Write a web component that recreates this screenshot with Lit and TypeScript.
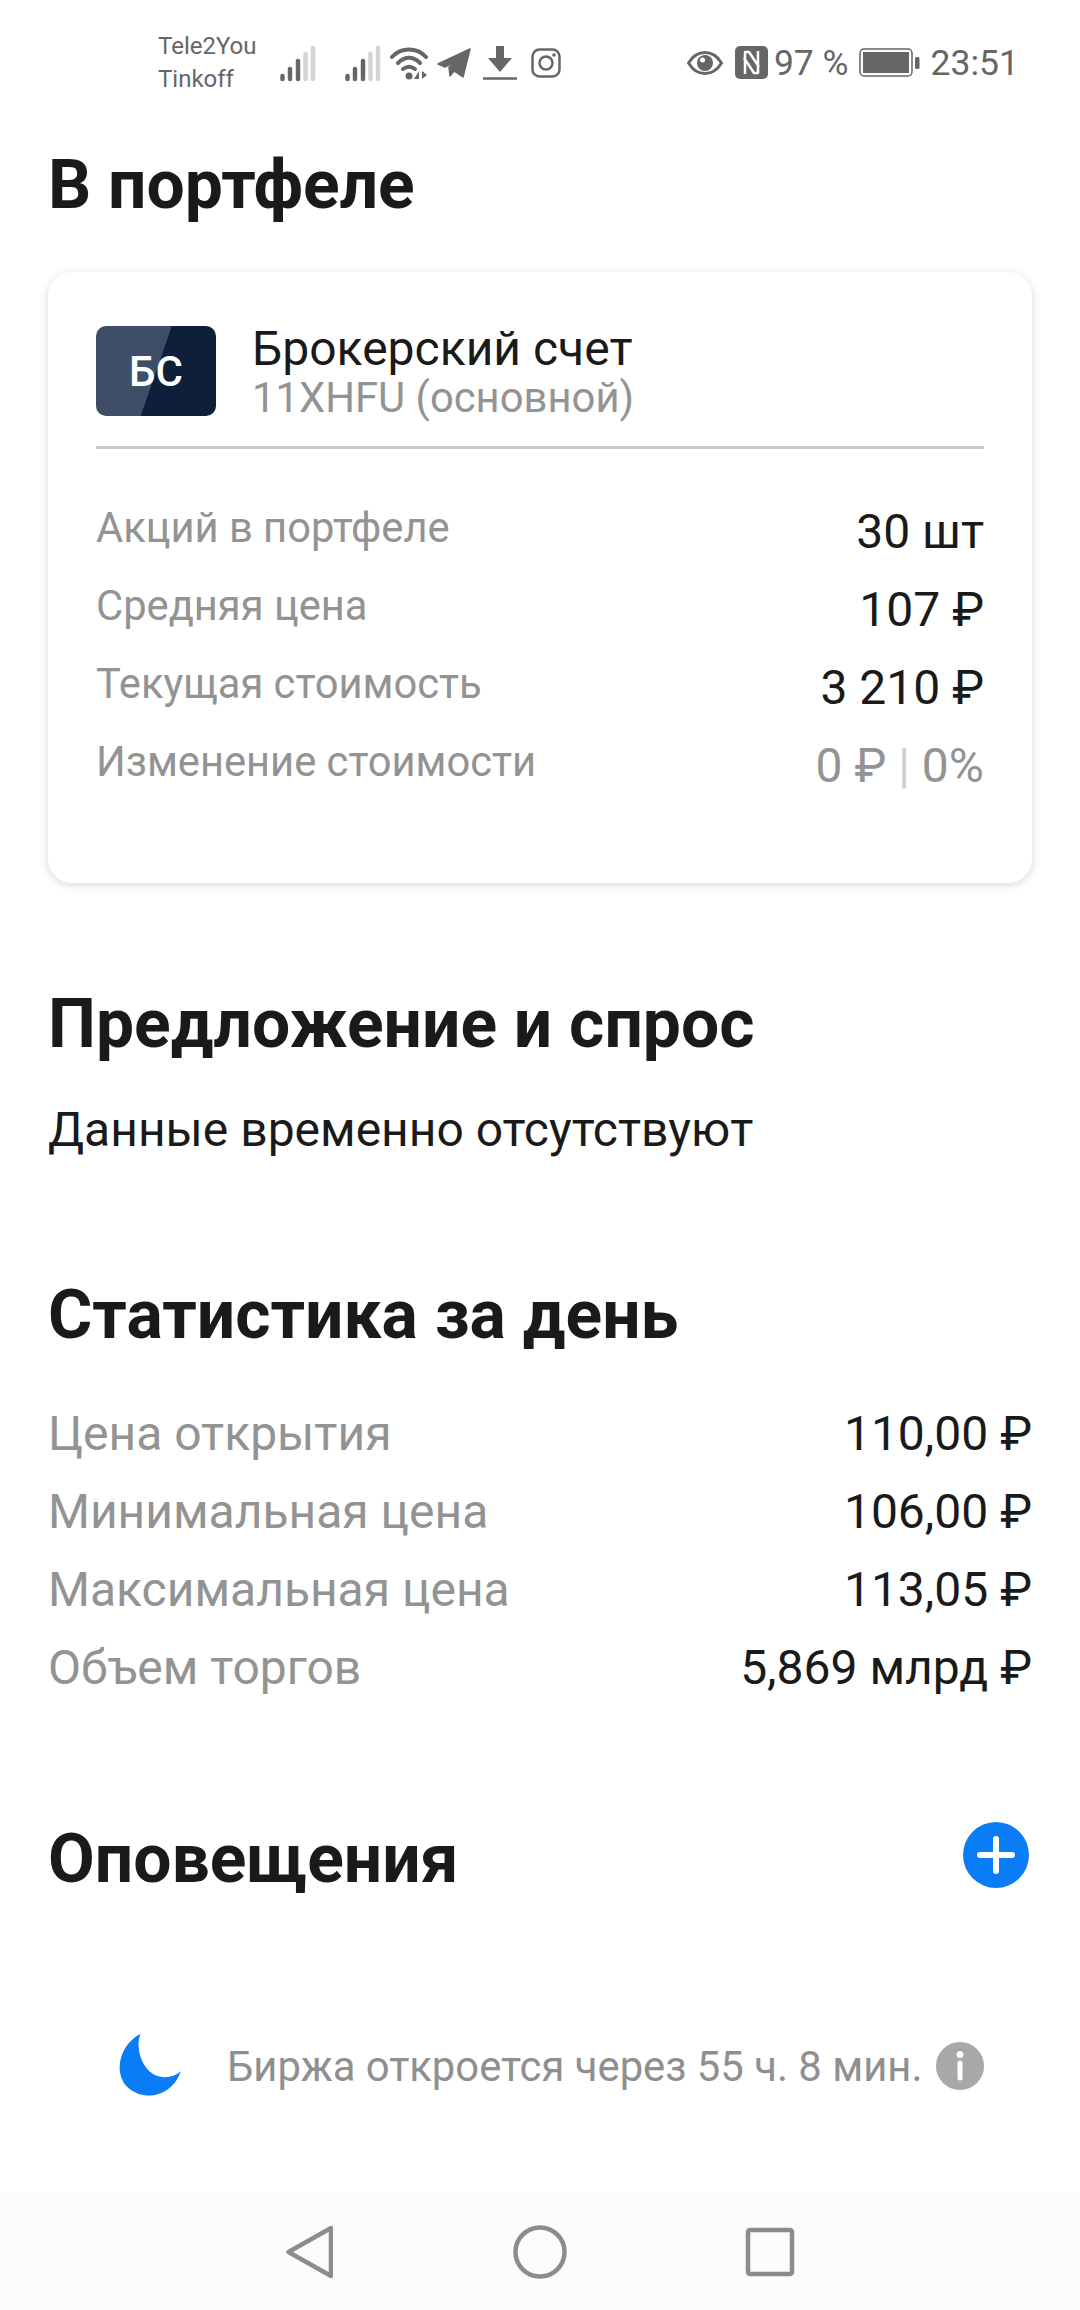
import { LitElement, html, css, svg } from "lit";
import { customElement } from "lit/decorators.js";

const signal = svg`<svg class="sig" width="36" height="38" viewBox="0 0 36 38"><g stroke-linecap="round" stroke-width="4.500" fill="none"><path d="M2.500 32v3" stroke="#666"/><path d="M10 25v10" stroke="#666"/><path d="M18 17v18" stroke="#666"/><path d="M25.500 10v25" stroke="#d4d4d4"/><path d="M33 4v31" stroke="#d4d4d4"/></g></svg>`;

const rows1 = [
  ["Акций в портфеле", "30 шт"],
  ["Средняя цена", "107 ₽"],
  ["Текущая стоимость", "3 210 ₽"],
];
const rows2 = [
  ["Цена открытия", "110,00 ₽"],
  ["Минимальная цена", "106,00 ₽"],
  ["Максимальная цена", "113,05 ₽"],
  ["Объем торгов", "5,869 млрд ₽"],
];

@customElement("app-root")
export class AppRoot extends LitElement {
  static styles = css`
    :host { display: flex; flex-direction: column; width: 1080px; height: 2310px; background: #fff; font-family: Roboto, "Liberation Sans", sans-serif; color: #1a1a1a; overflow: hidden; }
    .status { height: 125px; flex: none; box-sizing: border-box; display: flex; align-items: center; padding: 0 61px 0 158px; color: #666; }
    .ops { font-size: 24px; line-height: 33px; width: 122px; }
    .ops div { white-space: nowrap; }
    .st-left { display: flex; align-items: center; }
    .sp { flex: 1; }
    .st-right { display: flex; align-items: center; font-size: 35.5px; }
    .sig { display: block; }
    main { padding: 0 48px; flex: 1; }
    h2 { margin: 0; font-size: 67.8px; line-height: 70px; font-weight: 700; color: #1a1a1a; }
    .card { margin-top: 52px; height: 611px; box-sizing: border-box; padding: 54px 48px 0; border-radius: 24px; background: #fff; box-shadow: 0 2px 10px rgba(0,0,0,.16); }
    .acc { display: flex; height: 120px; border-bottom: 3px solid #c8c8c8; gap: 36px; }
    .badge { width: 120px; height: 90px; border-radius: 10px; background: linear-gradient(109deg, #3e4e66 0 50%, #0e1f3a 50.3%); color: #fff; font-size: 42px; font-weight: 500; display: flex; align-items: center; justify-content: center; }
    .acc-t { font-size: 48px; line-height: 50px; margin-top: -2px; }
    .acc-s { font-size: 41.8px; line-height: 48px; color: #939393; }
    .rows { margin-top: 43px; display: flex; flex-direction: column; }
    .row { display: flex; justify-content: space-between; align-items: center; height: 78px; }
    .k { color: #939393; font-size: 41.7px; margin-top: -7px; }
    .v { font-size: 48px; }
    .muted { color: #939393; }
    .bar { color: #cfcfcf; }
    .s2 { margin-top: 106px; }
    .empty { font-size: 48px; line-height: 54px; margin-top: 44px; }
    .s3 { margin-top: 123px; }
    .rows2 { margin-top: 44px; display: flex; flex-direction: column; }
    .rows2 .k { font-size: 48px; margin-top: 0; }
    .s4 { margin-top: 106px; display: flex; justify-content: space-between; align-items: center; height: 94px; }
    .plus { margin-right: 3px; margin-top: -9px; display: block; }
    .foot { margin-top: 127px; display: flex; align-items: center; padding-left: 68px; color: #8f8f8f; font-size: 41.8px; }
    .foot span { margin-left: 45px; margin-right: 14px; white-space: nowrap; }
    nav { height: 117px; flex: none; background: #fcfcfc; display: flex; align-items: center; padding-left: 285px; }
    nav svg { display: block; }
  `;

  render() {
    return html`
      <div class="status">
        <div class="st-left">
          <div class="ops"><div>Tele2You</div><div>Tinkoff</div></div>
          ${signal}
          <span style="width:29px"></span>
          ${signal}
          <svg style="margin-left:9px" width="40" height="36" viewBox="0 0 40 36"><g fill="none" stroke="#666" stroke-width="4" stroke-linecap="round"><path d="M2 12C11 2 27 2 36 12"/><path d="M8 18C15 11 23 11 30 18"/><path d="M13 24c4-3 8-3 12 0"/></g><circle cx="19" cy="31" r="3.500" fill="#666"/><path d="M29 34v-8l-5 8zM32 26v8l5-4z" fill="#666"/></svg>
          <svg style="margin-left:7px" width="34" height="32" viewBox="0 0 34 32"><path d="M1 17 33 2 26 30 17 24l-4 5-1-9 13-10-17 10z" fill="#666" stroke="#666" stroke-width="1.500" stroke-linejoin="round"/></svg>
          <svg style="margin-left:12px" width="34" height="36" viewBox="0 0 34 36"><path d="M13 1h8v12h8L17 27 5 13h8z" fill="#666"/><path d="M0 33.500h34" stroke="#666" stroke-width="2.500"/></svg>
          <svg style="margin-left:14px" width="30" height="30" viewBox="0 0 30 30"><rect x="1.500" y="1.500" width="27" height="27" rx="7" fill="none" stroke="#666" stroke-width="2.500"/><circle cx="15" cy="15" r="6.500" fill="none" stroke="#666" stroke-width="2.500"/><circle cx="23" cy="7" r="1.800" fill="#666"/></svg>
        </div>
        <div class="sp"></div>
        <div class="st-right">
          <svg width="36" height="28" viewBox="0 0 36 28"><path d="M1.500 14C10 0 26 0 34.500 14 26 28 10 28 1.500 14z" fill="none" stroke="#666" stroke-width="3"/><circle cx="18" cy="14" r="8" fill="#666"/><circle cx="15.500" cy="11" r="2.500" fill="#fff"/></svg>
          <svg style="margin-left:12px" width="33" height="33" viewBox="0 0 33 33"><rect width="33" height="33" rx="5" fill="#666"/><path d="M10 28 V6 H14 L24 21 M23 5 V27 H19 L9 12" fill="none" stroke="#fff" stroke-width="2.500" stroke-linejoin="round"/></svg>
          <span style="margin-left:6px; white-space:nowrap">97 %</span>
          <svg style="margin-left:10px" width="61" height="29" viewBox="0 0 61 29"><rect x="1" y="1" width="52" height="27" rx="4" fill="none" stroke="#666" stroke-width="1.500"/><rect x="4" y="4" width="46" height="21" fill="#666"/><rect x="56" y="9" width="4.500" height="12" rx="1.500" fill="#666"/></svg>
          <span style="margin-left:11px">23:51</span>
        </div>
      </div>
      <main>
        <h2 style="margin-top:25px">В портфеле</h2>
        <div class="card">
          <div class="acc">
            <div class="badge">БС</div>
            <div>
              <div class="acc-t">Брокерский счет</div>
              <div class="acc-s">11XHFU (основной)</div>
            </div>
          </div>
          <div class="rows">
            ${rows1.map(([k, v]) => html`<div class="row"><div class="k">${k}</div><div class="v">${v}</div></div>`)}
            <div class="row"><div class="k">Изменение стоимости</div><div class="v muted">0 ₽ <span class="bar">|</span> 0%</div></div>
          </div>
        </div>
        <h2 class="s2">Предложение и спрос</h2>
        <div class="empty">Данные временно отсутствуют</div>
        <h2 class="s3">Статистика за день</h2>
        <div class="rows2">
          ${rows2.map(([k, v]) => html`<div class="row"><div class="k">${k}</div><div class="v">${v}</div></div>`)}
        </div>
        <div class="s4">
          <h2>Оповещения</h2>
          <svg class="plus" width="66" height="66" viewBox="0 0 66 66"><circle cx="33" cy="33" r="33" fill="#0a7cf5"/><path d="M33 17v32M17 33h32" stroke="#fff" stroke-width="6" stroke-linecap="round"/></svg>
        </div>
        <div class="foot">
          <svg width="66" height="66" viewBox="0 0 62 62"><path d="M23 1C4 10-4 38 12 52c14 12 40 9 49-16C52 44 36 44 28 32 22 24 19 11 23 1z" fill="#0a7cf5"/></svg>
          <span>Биржа откроется через 55 ч. 8 мин.</span>
          <svg width="48" height="48" viewBox="0 0 48 48"><circle cx="24" cy="24" r="24" fill="#a8a8a8"/><circle cx="24" cy="12.500" r="3.500" fill="#fff"/><path d="M24 21v15" stroke="#fff" stroke-width="5" stroke-linecap="round"/></svg>
        </div>
      </main>
      <nav>
        <svg width="48" height="56" viewBox="0 0 48 56"><path d="M46 4 3.500 28 46 52z" fill="none" stroke="#8c8c8c" stroke-width="4.500" stroke-linejoin="round"/></svg>
        <svg style="margin-left:180px" width="54" height="54" viewBox="0 0 54 54"><circle cx="27" cy="27" r="24.500" fill="none" stroke="#8c8c8c" stroke-width="4.500"/></svg>
        <svg style="margin-left:178px" width="50" height="50" viewBox="0 0 50 50"><rect x="3" y="3" width="44" height="44" rx="2" fill="none" stroke="#8c8c8c" stroke-width="4.500"/></svg>
      </nav>
    `;
  }
}
